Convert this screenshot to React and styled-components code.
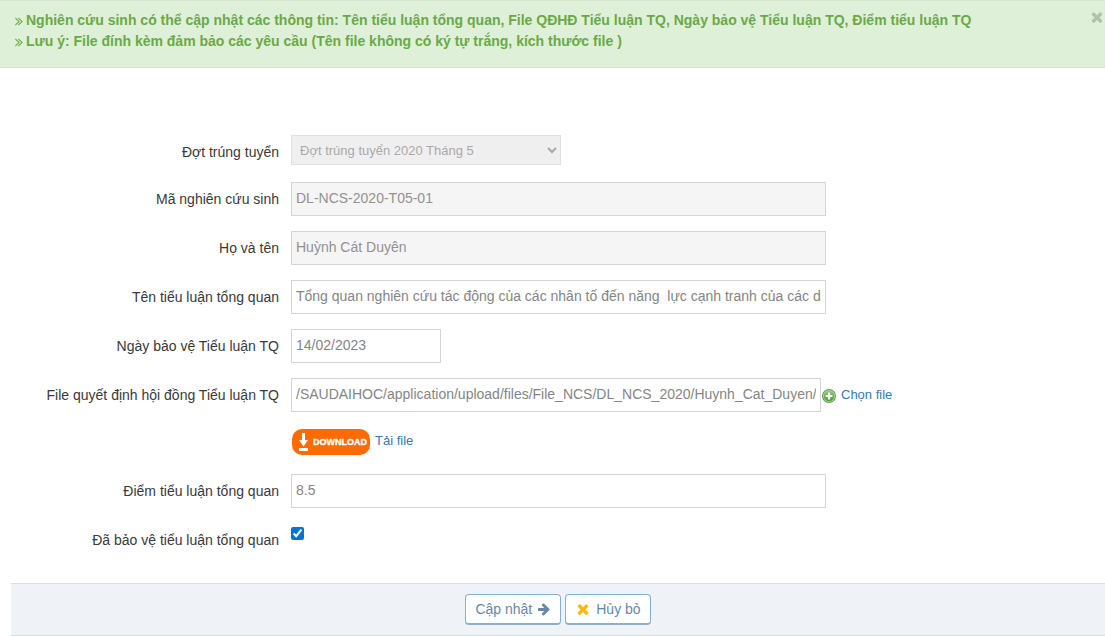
import React, { useState } from "react";
import styled, { createGlobalStyle } from "styled-components";

const App = () => {
  const [noticeOpen, setNoticeOpen] = useState(true);
  const [title, setTitle] = useState(
    "Tổng quan nghiên cứu tác động của các nhân tố đến năng  lực cạnh tranh của các doanh nghiệp"
  );
  const [defenseDate, setDefenseDate] = useState("14/02/2023");
  const [filePath, setFilePath] = useState(
    "/SAUDAIHOC/application/upload/files/File_NCS/DL_NCS_2020/Huynh_Cat_Duyen/"
  );
  const [score, setScore] = useState("8.5");
  const [defended, setDefended] = useState(true);

  return (
    <>
      <GlobalStyle />
      {noticeOpen && (
        <Notice>
          <NoticeLine>
            <DoubleAngleIcon />
            Nghiên cứu sinh có thể cập nhật các thông tin: Tên tiểu luận tổng
            quan, File QĐHĐ Tiểu luận TQ, Ngày bảo vệ Tiểu luận TQ, Điểm tiểu
            luận TQ
          </NoticeLine>
          <NoticeLine>
            <DoubleAngleIcon />
            Lưu ý: File đính kèm đảm bảo các yêu cầu (Tên file không có ký tự
            trắng, kích thước file )
          </NoticeLine>
          <CloseButton
            type="button"
            aria-label="Đóng"
            onClick={() => setNoticeOpen(false)}
          >
            <TimesIcon />
          </CloseButton>
        </Notice>
      )}

      <Form onSubmit={(e) => e.preventDefault()}>
        <Rows>
          <Row>
            <Label htmlFor="batch">Đợt trúng tuyển</Label>
            <Field $height={32}>
              <Select id="batch" disabled defaultValue="2020-05">
                <option value="2020-05">Đợt trúng tuyển 2020 Tháng 5</option>
              </Select>
            </Field>
          </Row>
          <Row>
            <Label htmlFor="code">Mã nghiên cứu sinh</Label>
            <Field>
              <TextInput id="code" readOnly value="DL-NCS-2020-T05-01" />
            </Field>
          </Row>
          <Row>
            <Label htmlFor="name">Họ và tên</Label>
            <Field>
              <TextInput id="name" readOnly value="Huỳnh Cát Duyên" />
            </Field>
          </Row>
          <Row>
            <Label htmlFor="title">Tên tiểu luận tổng quan</Label>
            <Field>
              <TextInput
                id="title"
                value={title}
                onChange={(e) => setTitle(e.target.value)}
              />
            </Field>
          </Row>
          <Row>
            <Label htmlFor="date">Ngày bảo vệ Tiểu luận TQ</Label>
            <Field>
              <TextInput
                id="date"
                $width={150}
                value={defenseDate}
                onChange={(e) => setDefenseDate(e.target.value)}
              />
            </Field>
          </Row>
          <Row>
            <Label htmlFor="file">File quyết định hội đồng Tiểu luận TQ</Label>
            <Field>
              <TextInput
                id="file"
                $width={530}
                value={filePath}
                onChange={(e) => setFilePath(e.target.value)}
              />
              <ChooseLink href="#choose">
                <AddIcon />
                Chọn file
              </ChooseLink>
            </Field>
          </Row>
          <Row>
            <span />
            <Field $height={32}>
              <DownloadLink href="#download">
                <DownloadBadge />
                Tải file
              </DownloadLink>
            </Field>
          </Row>
          <Row>
            <Label htmlFor="score">Điểm tiểu luận tổng quan</Label>
            <Field>
              <TextInput
                id="score"
                value={score}
                onChange={(e) => setScore(e.target.value)}
              />
            </Field>
          </Row>
          <Row>
            <Label htmlFor="defended">Đã bảo vệ tiểu luận tổng quan</Label>
            <Field>
              <Checkbox
                id="defended"
                type="checkbox"
                checked={defended}
                onChange={(e) => setDefended(e.target.checked)}
              />
            </Field>
          </Row>
        </Rows>

        <Actions>
          <ActionButton type="submit">
            Cập nhật
            <ArrowIcon />
          </ActionButton>
          <ActionButton type="button">
            <CancelMark>
              <TimesIcon />
            </CancelMark>
            Hủy bỏ
          </ActionButton>
        </Actions>
      </Form>
    </>
  );
};

export default App;

// 아이콘

const DoubleAngleIcon = () => (
  <Icon viewBox="0 0 1792 1792" $size={14} aria-hidden="true">
    <path d="M979 960q0 13-10 23l-466 466q-10 10-23 10t-23-10l-50-50q-10-10-10-23t10-23l393-393-393-393q-10-10-10-23t10-23l50-50q10-10 23-10t23 10l466 466q10 10 10 23zm384 0q0 13-10 23l-466 466q-10 10-23 10t-23-10l-50-50q-10-10-10-23t10-23l393-393-393-393q-10-10-10-23t10-23l50-50q10-10 23-10t23 10l466 466q10 10 10 23z" />
  </Icon>
);

const TimesIcon = () => (
  <Icon viewBox="0 0 1792 1792" $size={16} aria-hidden="true">
    <path d="M1490 1322q0 40-28 68l-136 136q-28 28-68 28t-68-28l-294-294-294 294q-28 28-68 28t-68-28l-136-136q-28-28-28-68t28-68l294-294-294-294q-28-28-28-68t28-68l136-136q28-28 68-28t68 28l294 294 294-294q28-28 68-28t68 28l136 136q28 28 28 68t-28 68l-294 294 294 294q28 28 28 68z" />
  </Icon>
);

const ArrowIcon = () => (
  <Icon viewBox="0 0 1792 1792" $size={14} aria-hidden="true">
    <path d="M1600 960q0 54-37 91l-651 651q-39 37-91 37-51 0-90-37l-75-75q-38-38-38-91t38-91l293-293h-704q-52 0-84.5-37.5t-32.5-90.5v-128q0-53 32.5-90.5t84.5-37.5h704l-293-294q-38-36-38-90t38-90l75-75q38-38 90-38 53 0 91 38l651 651q37 35 37 90z" />
  </Icon>
);

const AddIcon = () => (
  <svg width="16" height="16" viewBox="0 0 16 16" aria-hidden="true">
    <defs>
      <linearGradient id="addFill" x1="0" y1="0" x2="0" y2="1">
        <stop offset="0" stopColor="#8fc977" />
        <stop offset="1" stopColor="#4b9d3a" />
      </linearGradient>
    </defs>
    <circle cx="8" cy="9" r="7" fill="#5d9a50" />
    <circle cx="8" cy="9" r="6" fill="#b9dfab" />
    <circle cx="8" cy="9" r="5.3" fill="url(#addFill)" />
    <path d="M8 5.6v6.8M4.6 9h6.8" stroke="#fff" strokeWidth="2.2" />
  </svg>
);

const DownloadBadge = () => (
  <svg width="80" height="30" viewBox="0 0 80 30" aria-hidden="true">
    <rect x="1" y="3" width="78" height="26" rx="10" fill="#ff6b00" />
    <path d="M11 7h3v7h3l-4.5 6.5L8 14h3z" fill="#fff" />
    <rect x="8" y="22" width="9" height="3" fill="#fff" />
    <BadgeText x="22" y="19">
      DOWNLOAD
    </BadgeText>
  </svg>
);

// 스타일 컴포넌트

const GlobalStyle = createGlobalStyle`
  *,
  *::before,
  *::after {
    box-sizing: border-box;
  }

  body {
    margin: 0;
    background: #ffffff;
    color: #393939;
    font-family: "Liberation Sans", Arial, sans-serif;
    font-size: 14px;
    line-height: 20px;
  }
`;

const Icon = styled.svg`
  width: ${({ $size }) => $size}px;
  height: ${({ $size }) => $size}px;
  flex: none;
  fill: currentColor;
`;

const CancelMark = styled.span`
  display: flex;
  color: #fbb80f;
`;

const BadgeText = styled.text`
  fill: #ffffff;
  stroke: #ffffff;
  stroke-width: 0.3px;
  font-family: "Liberation Sans", Arial, sans-serif;
  font-size: 9px;
  font-weight: bold;
`;

const Notice = styled.div`
  position: relative;
  min-height: 68px;
  padding: 9px 32px 15px 12px;
  background: #dff0d8;
  border-top: 1px solid #d9e5d3;
  border-bottom: 1px solid #d6e9c6;
  color: #69aa46;
  font-weight: bold;
  line-height: 21px;
`;

const NoticeLine = styled.div`
  display: flex;
  align-items: center;
`;

const CloseButton = styled.button`
  position: absolute;
  top: 8px;
  right: 0;
  display: flex;
  padding: 0;
  border: none;
  background: none;
  color: #b3c0ad;
  cursor: pointer;
`;

const Form = styled.form`
  padding-top: 67px;
`;

const Rows = styled.div`
  display: grid;
  gap: 15px;
`;

const Row = styled.div`
  display: grid;
  grid-template-columns: 279px 1fr;
  column-gap: 12px;
`;

const Label = styled.label`
  padding-top: 7px;
  text-align: right;
`;

const Field = styled.div`
  display: flex;
  align-items: flex-start;
  min-width: 0;
  min-height: ${({ $height = 34 }) => $height}px;
`;

const TextInput = styled.input`
  width: ${({ $width = 535 }) => $width}px;
  max-width: 100%;
  height: 34px;
  padding: 4px 4px 6px;
  border: 1px solid #d5d5d5;
  border-radius: 0;
  background: #ffffff;
  color: #858585;
  font: inherit;

  &:read-only {
    background: #f5f5f5;
    color: #939192;
  }
`;

const Select = styled.select`
  width: 270px;
  height: 30px;
  padding: 3px 4px;
  border: 1px solid #d5d5d5;
  border-radius: 0;
  background: #e9e9e9;
  color: #858585;
  font-family: inherit;
  font-size: 13px;
  opacity: 0.7;
`;

const Checkbox = styled.input`
  width: 13px;
  height: 13px;
  margin: 4px 0 0;
  accent-color: #0075d7;
`;

const FieldLink = styled.a`
  display: flex;
  color: #337ab7;
  font-size: 13px;
  text-decoration: none;

  &:hover {
    text-decoration: underline;
  }
`;

const ChooseLink = styled(FieldLink)`
  align-items: center;
  gap: 4px;
  padding-top: 7px;
  white-space: nowrap;
`;

const DownloadLink = styled(FieldLink)`
  align-items: center;
  gap: 4px;
  height: 28px;
`;

const Actions = styled.div`
  display: flex;
  justify-content: center;
  gap: 4px;
  margin: 26px 0 0 11px;
  padding: 10px 20px;
  background: #eff3f8;
  border-top: 1px solid #d5dfe5;
  border-bottom: 1px solid #d5dfe5;
`;

const ActionButton = styled.button`
  display: flex;
  align-items: center;
  gap: 5px;
  height: 31px;
  padding: 0 9px 1px;
  border: 1px solid #8aafce;
  border-bottom-width: 2px;
  border-radius: 4px;
  background: #ffffff;
  color: #6688a6;
  font: inherit;
  cursor: pointer;
`;
